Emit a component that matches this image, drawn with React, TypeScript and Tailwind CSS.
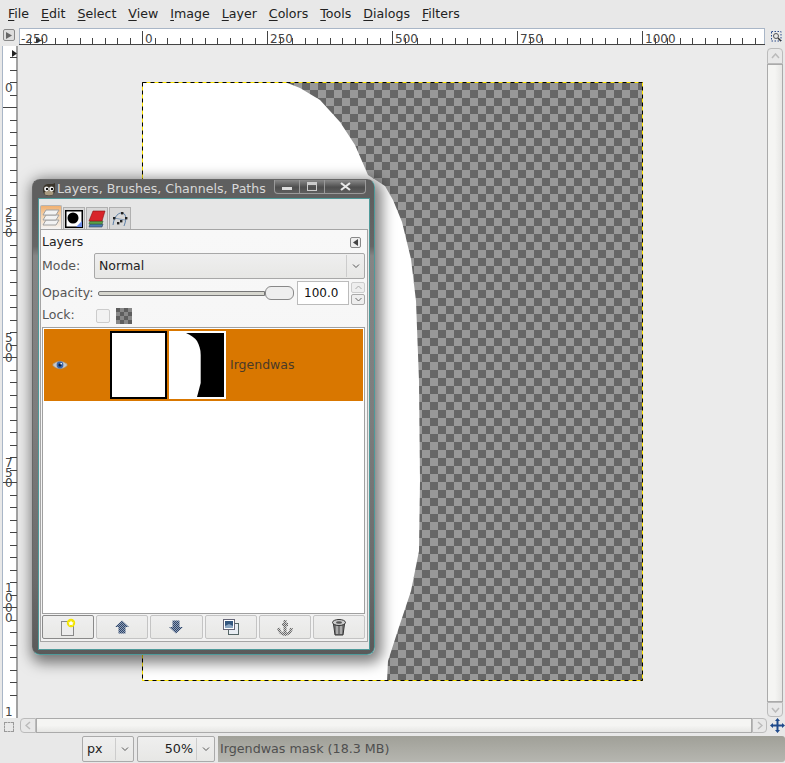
const menus = ["File", "Edit", "Select", "View", "Image", "Layer", "Colors", "Tools", "Dialogs", "Filters"];

const Chevron = () => (
  <svg width="8" height="6" viewBox="0 0 8 6" className="shrink-0">
    <path d="M1 1.5 L4 4.5 L7 1.5" fill="none" stroke="#555" strokeWidth="1" />
  </svg>
);

const HRuler = () => {
  const ticks = Array.from({ length: 60 }, (_, i) => i);
  return (
    <svg width="746" height="17" className="block bg-white">
      <rect x="0.5" y="0.5" width="745" height="16" fill="none" stroke="#a9b6c7" />
      <line x1="0" x2="746" y1="16.5" y2="16.5" stroke="#444" />
      {ticks.map((i) => {
        const x = Math.round(-2 + i * 12.5) + 0.5;
        const major = i % 10 === 0;
        return <line key={i} x1={x} x2={x} y1={major ? 3 : 10} y2="16" stroke="#444" />;
      })}
      {[
        ["-250", 2],
        ["0", 126],
        ["250", 251],
        ["500", 376],
        ["750", 501],
        ["1000", 626],
      ].map(([t, x]) => (
        <text key={t} x={x} y="15" fontSize="12" fill="#444" fontFamily="DejaVu Sans">
          {t}
        </text>
      ))}
      <path d="M17 10 L23 12.5 L17 15 Z" fill="#333" />
    </svg>
  );
};

const VRuler = () => {
  const ticks = Array.from({ length: 54 }, (_, i) => i);
  const labels = [
    ["0", 36],
    ["250", 161],
    ["500", 286],
    ["750", 411],
    ["1000", 536],
    ["1", 660],
  ] as const;
  return (
    <svg width="16" height="672" className="block ml-[2px] bg-white">
      <line x1="15" x2="15" y1="0" y2="672" stroke="#444" />
      <line x1="0.5" x2="0.5" y1="0" y2="672" stroke="#a9b6c7" />
      {ticks.map((i) => {
        const y = Math.round(-14 + i * 12.5) + 0.5;
        const major = (i + 4) % 10 === 0 && i >= 0;
        return <line key={i} y1={y} y2={y} x1={major ? 1 : 8} x2="15" stroke="#444" />;
      })}
      {labels.map(([t, y]) =>
        t.split("").map((c, i) => (
          <text key={t + i} x="3" y={y + 10 + i * 10} fontSize="12" fill="#444" fontFamily="DejaVu Sans">
            {c}
          </text>
        ))
      )}
      <path d="M10 4 L15 7.5 L10 11 Z" fill="#222" />
    </svg>
  );
};

const ImageArea = () => (
  <svg width="503" height="602" className="block ml-[123px] mt-[35px]">
    <defs>
      <pattern id="chk" width="16" height="16" patternUnits="userSpaceOnUse" x="1" y="1">
        <rect width="16" height="16" fill="#999" />
        <rect width="8" height="8" fill="#666" />
        <rect x="8" y="8" width="8" height="8" fill="#666" />
      </pattern>
    </defs>
    <rect x="1" y="1" width="501" height="599" fill="url(#chk)" />
    <path
      d="M1 1 H144 L159 7 L179 19 L199 41 L214 64 L227 94 L244 105 L252 119 L261 141 L270 178 L275 220 L278 300 L279 400 L278 470 L270 510 L258 546 L247 580 L246 600 H1 Z"
      fill="#fff"
    />
    <rect x="1.5" y="1.5" width="500" height="598" fill="none" stroke="#ffe600" />
    <rect x="1.5" y="1.5" width="500" height="598" fill="none" stroke="#000" strokeDasharray="4 4" />
  </svg>
);

const TabIcon = ({ kind }: { kind: string }) => {
  if (kind === "layers")
    return (
      <svg width="18" height="19" viewBox="0 0 18 19">
        {[12, 7, 2].map((y) => (
          <path key={y} d={`M4 ${y} H17 L14 ${y + 5} H1 Z`} fill="#f2f2f2" stroke="#a0a0a0" />
        ))}
      </svg>
    );
  if (kind === "brush")
    return (
      <svg width="18" height="18" viewBox="0 0 18 18">
        <rect x="0.75" y="0.75" width="16.5" height="16.5" fill="#fff" stroke="#000" strokeWidth="1.5" />
        <circle cx="8" cy="8" r="5.5" fill="#000" />
        <path d="M17 11 V17 H11 Z" fill="#6f8ee8" />
      </svg>
    );
  if (kind === "channels")
    return (
      <svg width="18" height="18" viewBox="0 0 18 18">
        <path d="M2 14 H15 L14 17 H1 Z" fill="#4a79b5" stroke="#345" strokeWidth="0.6" />
        <path d="M2 11 H15 L14 14 H1 Z" fill="#5aa04a" stroke="#363" strokeWidth="0.6" />
        <path d="M5 1 H17 L14 11 H1 Z" fill="#d8252a" stroke="#811" strokeWidth="0.6" />
      </svg>
    );
  return (
    <svg width="18" height="18" viewBox="0 0 18 18">
      <path d="M2 15 C3 6 8 2 12 3 C16 5 15 11 13 16" fill="none" stroke="#5b7fa8" />
      <path d="M3 8 L14 10" stroke="#5b7fa8" strokeWidth="0.7" />
      {[[3, 8], [11, 3], [15, 8], [10, 11], [7, 13]].map(([x, y]) => (
        <rect key={x} x={x - 1} y={y - 1} width="2.4" height="2.4" fill="#222" />
      ))}
    </svg>
  );
};

const HatchDefs = () => (
  <svg width="0" height="0" className="absolute">
    <defs>
      <pattern id="hatchBlue" width="2" height="2" patternUnits="userSpaceOnUse">
        <rect width="2" height="2" fill="#8fa0b8" />
        <rect width="1" height="1" fill="#2f4468" />
        <rect x="1" y="1" width="1" height="1" fill="#2f4468" />
      </pattern>
      <pattern id="hatchGray" width="2" height="2" patternUnits="userSpaceOnUse">
        <rect width="2" height="2" fill="#d0d0d0" />
        <rect width="1" height="1" fill="#666" />
        <rect x="1" y="1" width="1" height="1" fill="#666" />
      </pattern>
    </defs>
  </svg>
);

const ButtonIcon = ({ kind }: { kind: string }) => {
  if (kind === "new")
    return (
      <svg width="18" height="18" viewBox="0 0 18 18">
        <rect x="2.5" y="3.5" width="12" height="14" fill="#ececec" stroke="#888" />
        <circle cx="12" cy="5" r="4.2" fill="#f3e500" />
        <path d="M12 2.5 L13 4.3 L14.7 4.5 L13.5 6 L13.8 7.6 L12 6.8 L10.2 7.6 L10.5 6 L9.3 4.5 L11 4.3 Z" fill="#fff" />
      </svg>
    );
  if (kind === "up")
    return (
      <svg width="16" height="14" viewBox="0 0 16 14">
        <path d="M8 0.5 L15 7 H11.5 V13.5 H4.5 V7 H1 Z" fill="url(#hatchBlue)" />
      </svg>
    );
  if (kind === "down")
    return (
      <svg width="16" height="14" viewBox="0 0 16 14">
        <path d="M4.5 0.5 H11.5 V7 H15 L8 13.5 L1 7 H4.5 Z" fill="url(#hatchBlue)" />
      </svg>
    );
  if (kind === "dup")
    return (
      <svg width="16" height="16" viewBox="0 0 16 16">
        <rect x="5.5" y="4.5" width="10" height="11" fill="#e8edf3" stroke="#566" />
        <rect x="0.5" y="0.5" width="11" height="10" fill="#fff" stroke="#667" />
        <rect x="2" y="2" width="8" height="7" fill="#33577f" />
        <path d="M2 7 L6 5 L10 7 V9 H2 Z" fill="#8aa5c2" />
      </svg>
    );
  if (kind === "anchor")
    return (
      <svg width="16" height="17" viewBox="0 0 16 17">
        <path
          d="M8 1 V15 M5 5.5 H11 M1.5 9 C2 13 5 15.5 8 15.5 C11 15.5 14 13 14.5 9"
          fill="none"
          stroke="url(#hatchGray)"
          strokeWidth="3"
        />
      </svg>
    );
  return (
    <svg width="16" height="17" viewBox="0 0 16 17">
      <path d="M2.5 5 L4 16 H12 L13.5 5 Z" fill="#777" stroke="#333" />
      <path d="M6 7 V15 M10 7 V15" stroke="#ddd" />
      <ellipse cx="8" cy="3.5" rx="6.5" ry="3" fill="#ccc" stroke="#333" />
      <ellipse cx="8" cy="3.5" rx="3" ry="1.2" fill="#555" />
    </svg>
  );
};

const LayersWindow = () => (
  <div className="absolute left-[32px] top-[179px] w-[343px] h-[476px] flex flex-col rounded-[8px] border border-t-[#666] border-l-[#666] border-r-[#4f9a9a] border-b-[#4f9a9a] bg-[linear-gradient(180deg,#5c5c5c_0%,#666_14%,#858585_16%,#7d7d7d_50%,#6a6a6a_85%,#5a5a5a_100%)] shadow-[3px_4px_14px_4px_rgba(0,0,0,0.5)]">
    <div className="h-[18px] flex items-start bg-[#5f5f5f] rounded-t-[7px] pl-[9px] pr-[8px]">
      <svg width="14" height="13" viewBox="0 0 14 13" className="mt-[3px] shrink-0">
        <path d="M1 7 C1 2 4 1 7 1 C10 1 12 1 13 0 L13 7 C13 11 10 13 7 13 C4 13 1 11 1 7 Z" fill="#3a342a" />
        <ellipse cx="7" cy="10" rx="4.5" ry="2.5" fill="#a89a80" />
        <circle cx="4.5" cy="6" r="2.4" fill="#eee" />
        <circle cx="9.5" cy="6" r="2.4" fill="#eee" />
        <rect x="4" y="5" width="2" height="2" fill="#111" />
        <rect x="9" y="5" width="2" height="2" fill="#111" />
      </svg>
      <span className="ml-[1px] text-[12.6px] leading-[18px] text-[#d8d8d8] whitespace-nowrap">Layers, Brushes, Channels, Paths</span>
      <div className="ml-auto flex h-[14px] rounded-b-[4px] border border-t-0 border-[#9a9a9a] bg-[linear-gradient(180deg,#8a8a8a,#4e4e4e_55%,#5e5e5e)]">
        <div className="w-[25px] flex items-end justify-center pb-[3px] border-r border-[#999]">
          <div className="w-[10px] h-[3px] bg-[#ddd]" />
        </div>
        <div className="w-[25px] flex items-center justify-center border-r border-[#999]">
          <div className="w-[10px] h-[9px] border border-t-[3px] border-[#ccc]" />
        </div>
        <div className="w-[40px] flex items-center justify-center">
          <svg width="11" height="9" viewBox="0 0 11 9">
            <path d="M1 1 L10 8 M10 1 L1 8" stroke="#e8e8e8" strokeWidth="2.2" />
          </svg>
        </div>
      </div>
    </div>
    <div className="ml-[5px] mr-[4px] mb-[4px] w-[332px] flex-1 flex flex-col border border-[#4f9a9a] bg-[#e6e6e6] px-[1px] pt-[6px]">
      <div className="flex gap-[1px] h-[24px] items-end">
        <div className="w-[22px] h-[24px] flex items-center justify-center border border-b-0 border-[#b5b5b5] rounded-t-[2px] bg-[linear-gradient(180deg,#f0b070,#f6d5b0_45%,#f5f5f5)]">
          <TabIcon kind="layers" />
        </div>
        {["brush", "channels", "paths"].map((k) => (
          <div key={k} className="w-[22px] h-[22px] flex items-center justify-center border border-b-0 border-[#b0b0b0] bg-[#d8d8d8]">
            <TabIcon kind={k} />
          </div>
        ))}
      </div>
      <div className="w-[328px] flex flex-col border border-[#a5a5a5] bg-[linear-gradient(180deg,#f8f8f8,#f2f2f2)] pl-[1px] pr-[2px] pb-[2px] text-[12.5px]">
        <div className="h-[23px] pt-[1px] flex items-center justify-between text-[#222]">
          <span>Layers</span>
          <div className="w-[11px] h-[11px] mr-[4px] flex items-center justify-center rounded-[2px] border border-[#888] bg-[#eee]">
            <svg width="5" height="7" viewBox="0 0 5 7">
              <path d="M5 0 V7 L0 3.5 Z" fill="#444" />
            </svg>
          </div>
        </div>
        <div className="h-[26px] flex items-center">
          <span className="w-[52px] text-[#555]">Mode:</span>
          <div className="flex-1 h-[26px] flex items-center rounded-[2px] border border-[#a8a8a8] bg-[linear-gradient(180deg,#efefef,#e7e7e5)] pl-[4px]">
            <span className="flex-1 text-[12.5px] text-[#222]">Normal</span>
            <div className="w-[18px] h-[22px] flex items-center justify-center border-l border-[#ccc]">
              <Chevron />
            </div>
          </div>
        </div>
        <div className="mt-[2px] h-[24px] flex items-center">
          <span className="w-[56px] text-[#555]">Opacity:</span>
          <div className="w-[196px] flex items-center">
            <div className="flex-1 h-[5px] rounded-l-[2px] border border-[#777] bg-[#d8d8d0]" />
            <div className="w-[29px] h-[14px] rounded-[6px] border border-[#888] bg-[#eee]" />
          </div>
          <div className="ml-[3px] w-[52px] h-[24px] flex items-center border border-[#bbb] bg-white pl-[6px] text-[#111] text-[12px]">100.0</div>
          <div className="ml-[2px] w-[14px] flex flex-col gap-[1px]">
            <div className="h-[11px] flex items-center justify-center rounded-[2px] border border-[#ccc] bg-[#eee]">
              <svg width="7" height="5" viewBox="0 0 7 5">
                <path d="M0.5 4 L3.5 1 L6.5 4" fill="none" stroke="#aaa" />
              </svg>
            </div>
            <div className="h-[11px] flex items-center justify-center rounded-[2px] border border-[#aaa] bg-[#eee]">
              <svg width="7" height="5" viewBox="0 0 7 5">
                <path d="M0.5 1 L3.5 4 L6.5 1" fill="none" stroke="#666" />
              </svg>
            </div>
          </div>
        </div>
        <div className="h-[22px] flex items-center">
          <span className="w-[54px] text-[#555] mb-[1px]">Lock:</span>
          <div className="w-[14px] h-[14px] rounded-[2px] border border-[#ccc] bg-[#f2f2f2]" />
          <svg width="16" height="16" viewBox="0 0 16 16" className="ml-[6px]">
            <rect width="16" height="16" fill="#888" />
            {[0, 1, 2, 3].flatMap((r) =>
              [0, 1, 2, 3].map((c) =>
                (r + c) % 2 === 0 ? <rect key={`${r}-${c}`} x={c * 4} y={r * 4} width="4" height="4" fill="#5e5e5e" /> : null
              )
            )}
          </svg>
        </div>
        <div className="h-[287px] border border-[#a0a0a0] bg-white p-[1px]">
          <div className="h-[72px] flex items-center bg-[#d97700]">
            <svg width="16" height="10" viewBox="0 0 16 10" className="ml-[8px] shrink-0">
              <path d="M0.5 5 C4 0 12 0 15.5 5 C12 10 4 10 0.5 5 Z" fill="#c8c8c8" stroke="#9a8a70" strokeWidth="0.6" />
              <circle cx="8" cy="5" r="3.4" fill="#3a66ad" />
              <circle cx="8" cy="5" r="1.6" fill="#10203a" />
              <rect x="8.5" y="3" width="1.4" height="1.4" fill="#fff" />
            </svg>
            <div className="ml-[42px] w-[57px] h-[68px] border-2 border-black bg-white shrink-0" />
            <div className="ml-[2px] w-[57px] h-[68px] border-2 border-white bg-black shrink-0">
              <svg width="53" height="64" viewBox="0 0 53 64" className="block">
                <path d="M0 0 H15 C20 2 24 5 26 8 C28 12 29.7 16 29.7 22 V50 L26 64 H0 Z" fill="#fff" />
              </svg>
            </div>
            <span className="ml-[4px] text-[#4a3a28]">Irgendwas</span>
          </div>
        </div>
        <div className="mt-[1px] h-[24px] flex gap-[2px]">
          {["new", "up", "down", "dup", "anchor", "trash"].map((k, i) => (
            <div
              key={k}
              className={
                i === 0
                  ? "flex-1 flex items-center justify-center rounded-[2px] border border-[#8a8a8a] bg-[linear-gradient(180deg,#efefef,#e8e8e6)]"
                  : "flex-1 flex items-center justify-center rounded-[2px] border border-[#c4c4c4] bg-[linear-gradient(180deg,#efefef,#e8e8e6)]"
              }
            >
              <ButtonIcon kind={k} />
            </div>
          ))}
        </div>
      </div>
    </div>
  </div>
);

export default function App() {
  return (
    <div className="relative w-[785px] h-[763px] overflow-hidden flex flex-col bg-[#e8e8e8] font-['DejaVu_Sans',sans-serif] text-[12.7px]">
      <HatchDefs />
      {/* Menu bar */}
      <div className="h-[28px] flex items-center gap-[12px] pl-[8px] text-[12.6px] text-[#222]">
        {menus.map((m) => (
          <span key={m}>
            <span className="underline underline-offset-2">{m[0]}</span>
            {m.slice(1)}
          </span>
        ))}
      </div>

      {/* Top ruler row */}
      <div className="h-[18px] flex">
        <div className="w-[19px] pl-[3px] pt-[1px]">
          <div className="w-[12px] h-[12px] flex items-center justify-center rounded-[2px] border border-[#888] bg-[#ddd]">
            <svg width="6" height="7" viewBox="0 0 6 7">
              <path d="M0 0 L6 3.5 L0 7 Z" fill="#666" />
            </svg>
          </div>
        </div>
        <HRuler />
        <div className="ml-[6px] pt-[3px]">
          <svg width="11" height="11" viewBox="0 0 11 11">
            <rect x="0.5" y="0.5" width="9.5" height="9.5" fill="none" stroke="#2a4a8a" strokeDasharray="1.5 1.5" />
            <circle cx="5" cy="5" r="2.5" fill="none" stroke="#555" />
            <path d="M7 7 L10 10" stroke="#333" strokeWidth="1.5" />
          </svg>
        </div>
      </div>

      {/* Canvas row */}
      <div className="h-[672px] flex">
        <div className="w-[18px]">
          <VRuler />
        </div>
        <div className="w-[749px] bg-[#ebebeb]">
          <ImageArea />
        </div>
        <div className="w-[18px] pt-[2px] pr-[2px] flex flex-col h-[671px]">
          <div className="h-[16px] flex items-center justify-center rounded-t-[4px] border border-[#bbb] bg-[#e8e8e8]">
            <svg width="9" height="6" viewBox="0 0 9 6">
              <path d="M1 5 L4.5 1 L8 5" fill="none" stroke="#bbb" strokeWidth="1.5" />
            </svg>
          </div>
          <div className="flex-1 border border-[#aaa] bg-[linear-gradient(90deg,#f5f5f3_50%,#e6e6e4)]" />
          <div className="h-[15px] flex items-center justify-center rounded-b-[4px] border border-[#bbb] bg-[#e8e8e8]">
            <svg width="9" height="6" viewBox="0 0 9 6">
              <path d="M1 1 L4.5 5 L8 1" fill="none" stroke="#bbb" strokeWidth="1.5" />
            </svg>
          </div>
        </div>
      </div>

      {/* Horizontal scrollbar row */}
      <div className="h-[17px] flex items-start">
        <div className="w-[20px] pl-[4px] pt-[4px]">
          <div className="w-[10px] h-[10px] border border-dashed border-[#999]" />
        </div>
        <div className="h-[15px] w-[16px] flex items-center justify-center rounded-l-[4px] border border-[#bbb] bg-[#e8e8e8]">
          <svg width="6" height="9" viewBox="0 0 6 9">
            <path d="M5 1 L1 4.5 L5 8" fill="none" stroke="#bbb" strokeWidth="1.5" />
          </svg>
        </div>
        <div className="h-[15px] w-[716px] border border-[#aaa] bg-[linear-gradient(180deg,#f5f5f3_50%,#e6e6e4)]" />
        <div className="h-[15px] w-[15px] flex items-center justify-center rounded-r-[4px] border border-[#bbb] bg-[#e8e8e8]">
          <svg width="6" height="9" viewBox="0 0 6 9">
            <path d="M1 1 L5 4.5 L1 8" fill="none" stroke="#bbb" strokeWidth="1.5" />
          </svg>
        </div>
        <svg width="15" height="15" viewBox="0 0 15 15" className="ml-[3px]">
          <path
            d="M7.5 0 L10 3 H8.5 V6.5 H12 V5 L15 7.5 L12 10 V8.5 H8.5 V12 H10 L7.5 15 L5 12 H6.5 V8.5 H3 V10 L0 7.5 L3 5 V6.5 H6.5 V3 H5 Z"
            fill="#1f4a8c"
          />
        </svg>
      </div>

      {/* Status bar */}
      <div className="h-[28px] flex pl-[82px] gap-[3px] pt-[1px] pb-[1px]">
        <div className="w-[52px] flex items-center rounded-[2px] border border-[#aaa] bg-[linear-gradient(180deg,#efefef,#e7e7e5)] pl-[4px]">
          <span className="flex-1 text-[#222]">px</span>
          <div className="w-[18px] h-[22px] flex items-center justify-center border-l border-[#ccc]">
            <Chevron />
          </div>
        </div>
        <div className="w-[78px] flex items-center rounded-[2px] border border-[#aaa] bg-[linear-gradient(180deg,#efefef,#e7e7e5)]">
          <span className="flex-1 text-right pr-[3px] text-[#222]">50%</span>
          <div className="w-[18px] h-[22px] flex items-center justify-center border-l border-[#ccc]">
            <Chevron />
          </div>
        </div>
        <div className="flex-1 flex items-center rounded-tr-[3px] rounded-br-[3px] bg-[linear-gradient(180deg,#a0a098,#b6b6b0)] pl-[2px] text-[#4f4f4f]">
          Irgendwas mask (18.3 MB)
        </div>
      </div>

      <LayersWindow />
    </div>
  );
}
